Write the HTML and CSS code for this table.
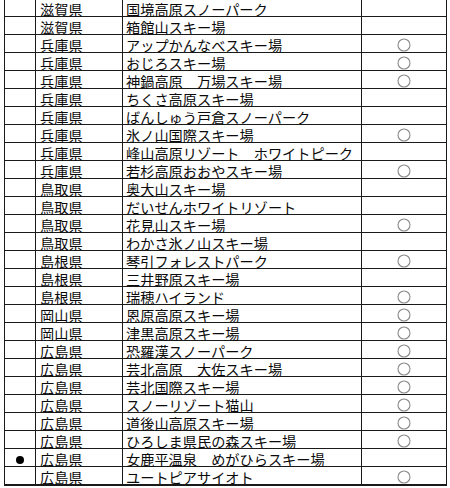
FILE: index.html
```html
<!DOCTYPE html>
<html lang="ja">
<head>
<meta charset="utf-8">
<link rel="stylesheet" href="styles.css">
</head>
<body>
<table class="sheet">
<colgroup><col class="c1"><col class="c2"><col class="c3"><col class="c4"></colgroup>
<tbody>
<tr><td></td><td class="pref">滋賀県</td><td class="name">国境高原スノーパーク</td><td class="mark"></td></tr>
<tr><td></td><td class="pref">滋賀県</td><td class="name">箱館山スキー場</td><td class="mark"></td></tr>
<tr><td></td><td class="pref">兵庫県</td><td class="name">アップかんなべスキー場</td><td class="mark"><svg class="ring" viewBox="0 0 14 14"><circle cx="7" cy="7" r="6"/></svg></td></tr>
<tr><td></td><td class="pref">兵庫県</td><td class="name">おじろスキー場</td><td class="mark"><svg class="ring" viewBox="0 0 14 14"><circle cx="7" cy="7" r="6"/></svg></td></tr>
<tr><td></td><td class="pref">兵庫県</td><td class="name">神鍋高原　万場スキー場</td><td class="mark"><svg class="ring" viewBox="0 0 14 14"><circle cx="7" cy="7" r="6"/></svg></td></tr>
<tr><td></td><td class="pref">兵庫県</td><td class="name">ちくさ高原スキー場</td><td class="mark"></td></tr>
<tr><td></td><td class="pref">兵庫県</td><td class="name">ばんしゅう戸倉スノーパーク</td><td class="mark"></td></tr>
<tr><td></td><td class="pref">兵庫県</td><td class="name">氷ノ山国際スキー場</td><td class="mark"><svg class="ring" viewBox="0 0 14 14"><circle cx="7" cy="7" r="6"/></svg></td></tr>
<tr><td></td><td class="pref">兵庫県</td><td class="name">峰山高原リゾート　ホワイトピーク</td><td class="mark"></td></tr>
<tr><td></td><td class="pref">兵庫県</td><td class="name">若杉高原おおやスキー場</td><td class="mark"><svg class="ring" viewBox="0 0 14 14"><circle cx="7" cy="7" r="6"/></svg></td></tr>
<tr><td></td><td class="pref">鳥取県</td><td class="name">奥大山スキー場</td><td class="mark"></td></tr>
<tr><td></td><td class="pref">鳥取県</td><td class="name">だいせんホワイトリゾート</td><td class="mark"></td></tr>
<tr><td></td><td class="pref">鳥取県</td><td class="name">花見山スキー場</td><td class="mark"><svg class="ring" viewBox="0 0 14 14"><circle cx="7" cy="7" r="6"/></svg></td></tr>
<tr><td></td><td class="pref">鳥取県</td><td class="name">わかさ氷ノ山スキー場</td><td class="mark"></td></tr>
<tr><td></td><td class="pref">島根県</td><td class="name">琴引フォレストパーク</td><td class="mark"><svg class="ring" viewBox="0 0 14 14"><circle cx="7" cy="7" r="6"/></svg></td></tr>
<tr><td></td><td class="pref">島根県</td><td class="name">三井野原スキー場</td><td class="mark"></td></tr>
<tr><td></td><td class="pref">島根県</td><td class="name">瑞穂ハイランド</td><td class="mark"><svg class="ring" viewBox="0 0 14 14"><circle cx="7" cy="7" r="6"/></svg></td></tr>
<tr><td></td><td class="pref">岡山県</td><td class="name">恩原高原スキー場</td><td class="mark"><svg class="ring" viewBox="0 0 14 14"><circle cx="7" cy="7" r="6"/></svg></td></tr>
<tr><td></td><td class="pref">岡山県</td><td class="name">津黒高原スキー場</td><td class="mark"><svg class="ring" viewBox="0 0 14 14"><circle cx="7" cy="7" r="6"/></svg></td></tr>
<tr><td></td><td class="pref">広島県</td><td class="name">恐羅漢スノーパーク</td><td class="mark"><svg class="ring" viewBox="0 0 14 14"><circle cx="7" cy="7" r="6"/></svg></td></tr>
<tr><td></td><td class="pref">広島県</td><td class="name">芸北高原　大佐スキー場</td><td class="mark"><svg class="ring" viewBox="0 0 14 14"><circle cx="7" cy="7" r="6"/></svg></td></tr>
<tr><td></td><td class="pref">広島県</td><td class="name">芸北国際スキー場</td><td class="mark"><svg class="ring" viewBox="0 0 14 14"><circle cx="7" cy="7" r="6"/></svg></td></tr>
<tr><td></td><td class="pref">広島県</td><td class="name">スノーリゾート猫山</td><td class="mark"><svg class="ring" viewBox="0 0 14 14"><circle cx="7" cy="7" r="6"/></svg></td></tr>
<tr><td></td><td class="pref">広島県</td><td class="name">道後山高原スキー場</td><td class="mark"><svg class="ring" viewBox="0 0 14 14"><circle cx="7" cy="7" r="6"/></svg></td></tr>
<tr><td></td><td class="pref">広島県</td><td class="name">ひろしま県民の森スキー場</td><td class="mark"><svg class="ring" viewBox="0 0 14 14"><circle cx="7" cy="7" r="6"/></svg></td></tr>
<tr><td class="dotcell"><svg class="dot" viewBox="0 0 10 10"><circle cx="5" cy="5" r="4"/></svg></td><td class="pref">広島県</td><td class="name">女鹿平温泉　めがひらスキー場</td><td class="mark"></td></tr>
<tr><td></td><td class="pref">広島県</td><td class="name">ユートピアサイオト</td><td class="mark"><svg class="ring" viewBox="0 0 14 14"><circle cx="7" cy="7" r="6"/></svg></td></tr>
</tbody>
</table>
</body>
</html>
```
FILE: styles.css
```css
html, body {
  margin: 0;
  padding: 0;
  background: #fff;
}
body {
  overflow: hidden;
  height: 488px;
}
.sheet {
  border-collapse: collapse;
  table-layout: fixed;
  width: 442px;
  margin: -1px 0 0 4px;
  font-family: "Noto Sans CJK JP", "Noto Sans", sans-serif;
  font-size: 14.2px;
  color: #0a0a0a;
}
.c1 { width: 31px; }
.c2 { width: 87px; }
.c3 { width: 239px; }
.c4 { width: 85px; }
.sheet td {
  border: 1px solid #1a1a1a;
  height: 17px;
  padding: 0;
  line-height: 14px;
  vertical-align: bottom;
  white-space: nowrap;
}
.sheet tr:first-child td {
  border-top: none;
}
.sheet tr:last-child td {
  border-bottom: 2px solid #1a1a1a;
}
.pref {
  padding-left: 4px !important;
}
.name {
  padding-left: 3px !important;
}
.mark, .dotcell {
  text-align: center;
}
.ring {
  width: 14px;
  height: 14px;
  display: inline-block;
  vertical-align: bottom;
}
.ring circle {
  fill: none;
  stroke: #8a8a8a;
  stroke-width: 1.1;
}
.dot {
  width: 10px;
  height: 10px;
  display: inline-block;
  vertical-align: bottom;
  margin-bottom: 1px;
}
.dot circle {
  fill: #000;
}
```
